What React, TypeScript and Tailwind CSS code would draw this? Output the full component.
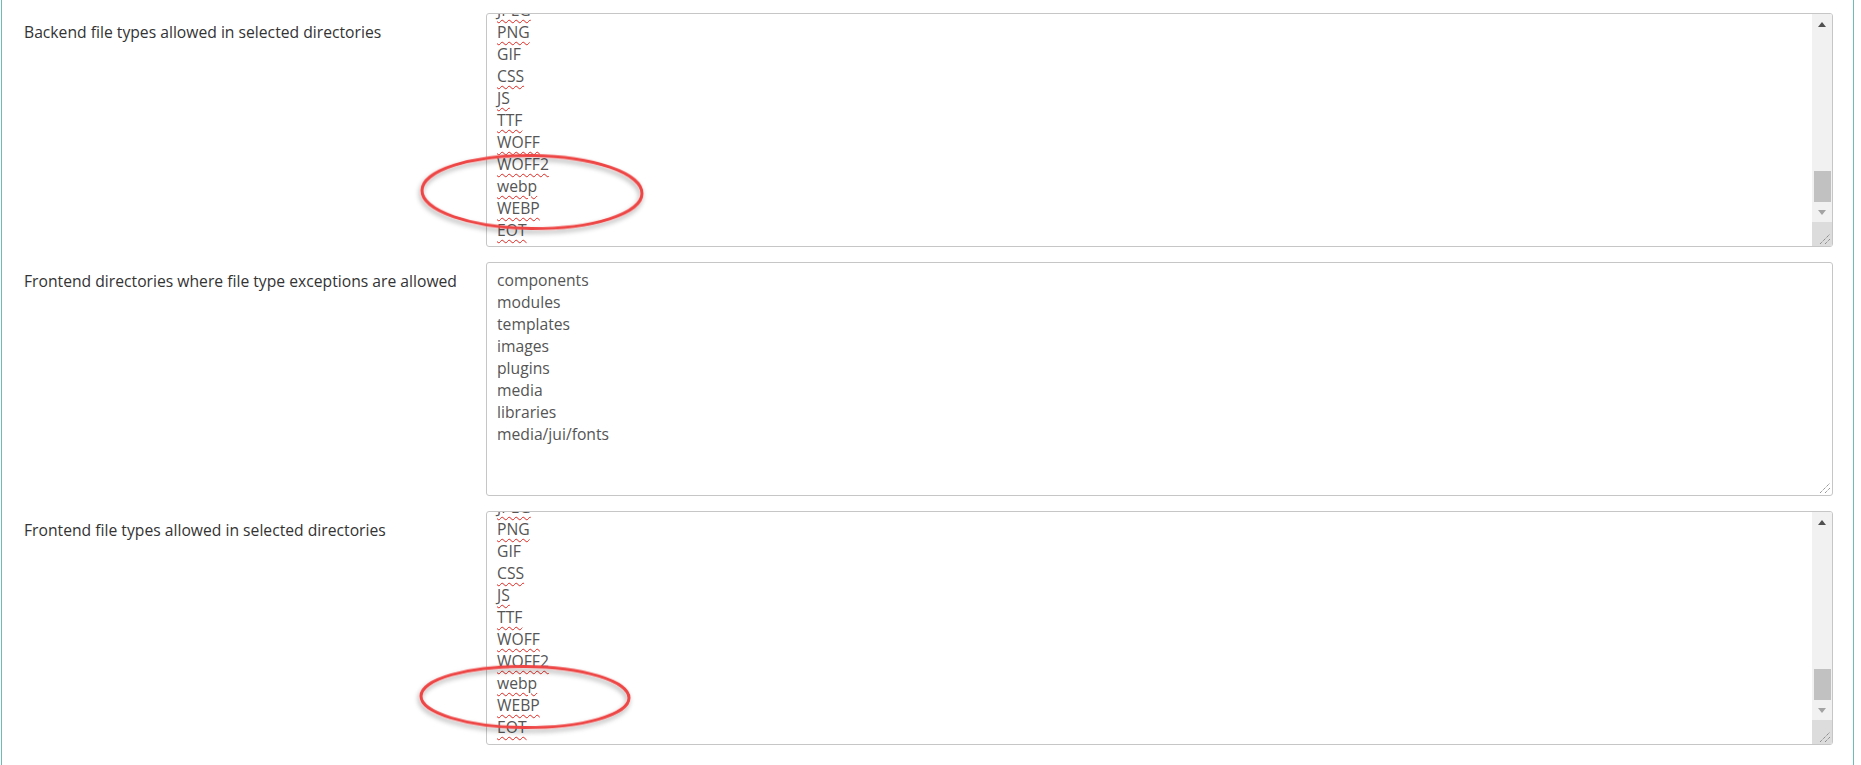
import React from "react";

type Item = [string, boolean];

const FILE_TYPES: Item[] = [
  ["JPEG", true],
  ["PNG", true],
  ["GIF", false],
  ["CSS", true],
  ["JS", true],
  ["TTF", true],
  ["WOFF", true],
  ["WOFF2", true],
  ["webp", true],
  ["WEBP", true],
  ["EOT", true],
];

const DIRS: Item[] = [
  ["components", false],
  ["modules", false],
  ["templates", false],
  ["images", false],
  ["plugins", false],
  ["media", false],
  ["libraries", false],
  ["media/jui/fonts", false],
];

function Lines({ items }: { items: Item[] }) {
  return (
    <>
      {items.map(([t, sq]) => (
        <div key={t} className="whitespace-nowrap">
          {sq ? (
            <span className="underline decoration-wavy decoration-[#e0261f] decoration-1 underline-offset-[3px]">
              {t}
            </span>
          ) : (
            t
          )}
        </div>
      ))}
    </>
  );
}

function Hatch() {
  return (
    <svg width="12" height="12" viewBox="0 0 12 12">
      <line x1="1" y1="11" x2="11" y2="1" stroke="#6b6b6b" strokeWidth="1" strokeDasharray="1 1" />
      <line x1="6" y1="11" x2="11" y2="6" stroke="#6b6b6b" strokeWidth="1" strokeDasharray="1 1" />
    </svg>
  );
}

function Scrollbar() {
  return (
    <div className="flex w-[20px] shrink-0 flex-col bg-[#f1f1f1]">
      <div className="flex h-[21px] items-center justify-center">
        <svg width="8" height="5" viewBox="0 0 8 5">
          <path d="M0 5 L4 0 L8 5 Z" fill="#505050" />
        </svg>
      </div>
      <div className="flex flex-1 flex-col justify-end pl-[2px] pr-[1px]">
        <div className="h-[31px] bg-[#c1c1c1]" />
      </div>
      <div className="flex h-[20px] items-center justify-center">
        <svg width="8" height="5" viewBox="0 0 8 5">
          <path d="M0 0 L8 0 L4 5 Z" fill="#a3a3a3" />
        </svg>
      </div>
      <div className="flex h-[24px] items-end justify-end bg-[#dcdcdc] pb-[1px] pr-[1px]">
        <Hatch />
      </div>
    </div>
  );
}

function ScrolledBox({ offset }: { offset: number }) {
  return (
    <div className="flex h-[234px] w-[1347px] overflow-hidden rounded-[3px] border border-[#c6c6c6] bg-white">
      <div className="min-w-0 flex-1 overflow-hidden pl-[10px] text-[15.7px] leading-[22px] text-[#555]">
        <div style={{ marginTop: offset }}>
          <Lines items={FILE_TYPES} />
        </div>
      </div>
      <Scrollbar />
    </div>
  );
}

function PlainBox() {
  return (
    <div className="relative h-[234px] w-[1347px] overflow-hidden rounded-[3px] border border-[#c6c6c6] bg-white pl-[10px] pt-[6px] text-[15.7px] leading-[22px] text-[#555]">
      <Lines items={DIRS} />
      <div className="absolute bottom-[1px] right-[1px]">
        <Hatch />
      </div>
    </div>
  );
}

function Row({ label, children }: { label: string; children: React.ReactNode }) {
  return (
    <div className="flex">
      <div className="w-[484px] shrink-0 pl-[22px] pt-[8px] text-[15.7px] leading-[22px] text-[#333]">
        {label}
      </div>
      {children}
    </div>
  );
}

export default function App() {
  return (
    <div className="relative h-[765px] w-[1861px] overflow-hidden bg-white font-['Open_Sans','Noto_Sans',sans-serif]">
      <div className="ml-[1px] flex h-full w-[1853px] flex-col gap-[15px] border-x border-[#6dbcb5] pt-[13px]">
        <Row label="Backend file types allowed in selected directories">
          <ScrolledBox offset={-15} />
        </Row>
        <Row label="Frontend directories where file type exceptions are allowed">
          <PlainBox />
        </Row>
        <Row label="Frontend file types allowed in selected directories">
          <ScrolledBox offset={-16} />
        </Row>
      </div>
      <svg
        className="pointer-events-none absolute left-0 top-0"
        width="1861"
        height="765"
        viewBox="0 0 1861 765"
      >
        <defs>
          <filter id="sh" x="-20%" y="-40%" width="140%" height="180%">
            <feDropShadow dx="-1" dy="3" stdDeviation="2.5" floodColor="#000" floodOpacity="0.35" />
          </filter>
        </defs>
        <ellipse
          cx="532"
          cy="192"
          rx="110"
          ry="36.5"
          fill="none"
          stroke="#ee4444"
          strokeWidth="3"
          filter="url(#sh)"
          transform="rotate(0.8 532 192)"
        />
        <ellipse
          cx="525"
          cy="697"
          rx="104"
          ry="30.5"
          fill="none"
          stroke="#ee4444"
          strokeWidth="3"
          filter="url(#sh)"
          transform="rotate(0.5 525 697)"
        />
      </svg>
    </div>
  );
}
